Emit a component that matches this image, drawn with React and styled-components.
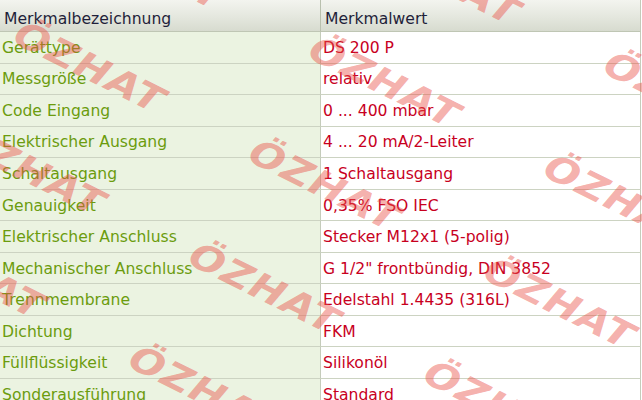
import React from "react";
import styled, { createGlobalStyle } from "styled-components";

const rows = [
  ["Gerättype", "DS 200 P"],
  ["Messgröße", "relativ"],
  ["Code Eingang", "0 ... 400 mbar"],
  ["Elektrischer Ausgang", "4 ... 20 mA/2-Leiter"],
  ["Schaltausgang", "1 Schaltausgang"],
  ["Genauigkeit", "0,35% FSO IEC"],
  ["Elektrischer Anschluss", "Stecker M12x1 (5-polig)"],
  ["Mechanischer Anschluss", 'G 1/2" frontbündig, DIN 3852'],
  ["Trennmembrane", "Edelstahl 1.4435 (316L)"],
  ["Dichtung", "FKM"],
  ["Füllflüssigkeit", "Silikonöl"],
  ["Sonderausführung", "Standard"],
];

// watermark lattice: centre of the first letter
const marks = [];
for (let j = -1; j <= 3; j++) {
  for (let i = -1; i <= 2; i++) {
    const x = 32 + i * 295 - j * 60;
    const y = 38 + i * 15 + j * 103;
    if (x > -180 && x < 660 && y > -90 && y < 420) marks.push([x, y]);
  }
}

const App = () => (
  <Page>
    <GlobalStyle />
    <Table>
      <HeaderCell>Merkmalbezeichnung</HeaderCell>
      <HeaderCell $last>Merkmalwert</HeaderCell>
      {rows.map(([label, value]) => (
        <React.Fragment key={label}>
          <LabelCell>{label}</LabelCell>
          <ValueCell>{value}</ValueCell>
        </React.Fragment>
      ))}
    </Table>
    {marks.map(([x, y]) => (
      <Watermark key={`${x}-${y}`} $x={x} $y={y}>
        ÖZHAT
      </Watermark>
    ))}
  </Page>
);

const GlobalStyle = createGlobalStyle`
  body {
    margin: 0;
    background: #fff;
    font-family: "DejaVu Sans", Verdana, sans-serif;
  }
`;

const Page = styled.div`
  position: relative;
  width: 642px;
  height: 400px;
  overflow: hidden;
  background: #fff;
`;

const Table = styled.div`
  display: grid;
  grid-template-columns: 321px 320px;
  width: 641px;
  font-size: 15.6px;
  line-height: 18px;
`;

const HeaderCell = styled.div`
  box-sizing: border-box;
  height: 32px;
  padding: 10px 4px 0;
  color: #1f1f3a;
  background: linear-gradient(to bottom, #f3f4ef 0%, #e4e7de 55%, #d7dbcf 100%);
  border-bottom: 1px solid #bfc6b4;
  border-right: 1px solid ${(p) => (p.$last ? "#c4cab9" : "#b9c0ae")};
  white-space: nowrap;
`;

const Cell = styled.div`
  box-sizing: border-box;
  height: 31.55px;
  display: flex;
  align-items: center;
  padding: 1px 2px 0;
  border-bottom: 1px solid #ccd3c2;
  white-space: nowrap;
`;

const LabelCell = styled(Cell)`
  background: #ebf3e1;
  color: #6b9c0e;
  border-right: 1px solid #c5ccbb;
`;

const ValueCell = styled(Cell)`
  background: #fff;
  color: #c8001e;
  border-right: 1px solid #c5ccbb;
`;

const Watermark = styled.span`
  position: absolute;
  left: ${(p) => p.$x - 14}px;
  top: ${(p) => p.$y - 19}px;
  height: 38px;
  line-height: 38px;
  transform-origin: 14px 50%;
  transform: scaleX(1.3) rotate(33deg);
  font-family: "DejaVu Sans", sans-serif;
  font-weight: bold;
  font-size: 34px;
  letter-spacing: 1px;
  color: rgba(234, 80, 70, 0.46);
  white-space: nowrap;
  pointer-events: none;
`;

export default App;
